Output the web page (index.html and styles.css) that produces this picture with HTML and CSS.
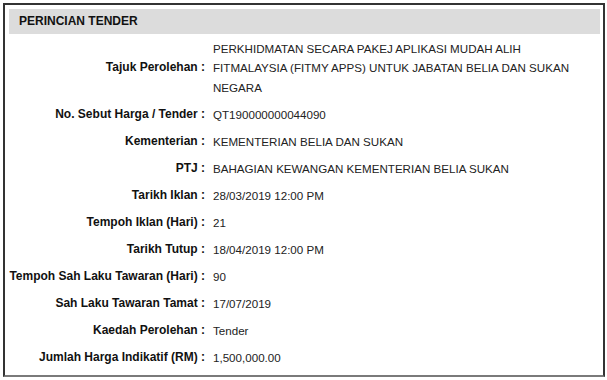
FILE: index.html
```html
<!DOCTYPE html>
<html>
<head>
<meta charset="utf-8">
<link rel="stylesheet" href="styles.css">
</head>
<body>
<div class="frame">
  <div class="panel-head">PERINCIAN TENDER</div>
  <div class="details">
    <div class="label">Tajuk Perolehan :</div>
    <div class="value">PERKHIDMATAN SECARA PAKEJ APLIKASI MUDAH ALIH FITMALAYSIA (FITMY APPS) UNTUK JABATAN BELIA DAN SUKAN NEGARA</div>
    <div class="label">No. Sebut Harga / Tender :</div>
    <div class="value">QT190000000044090</div>
    <div class="label">Kementerian :</div>
    <div class="value">KEMENTERIAN BELIA DAN SUKAN</div>
    <div class="label">PTJ :</div>
    <div class="value">BAHAGIAN KEWANGAN KEMENTERIAN BELIA SUKAN</div>
    <div class="label">Tarikh Iklan :</div>
    <div class="value">28/03/2019 12:00 PM</div>
    <div class="label">Tempoh Iklan (Hari) :</div>
    <div class="value">21</div>
    <div class="label">Tarikh Tutup :</div>
    <div class="value">18/04/2019 12:00 PM</div>
    <div class="label">Tempoh Sah Laku Tawaran (Hari) :</div>
    <div class="value">90</div>
    <div class="label">Sah Laku Tawaran Tamat :</div>
    <div class="value">17/07/2019</div>
    <div class="label">Kaedah Perolehan :</div>
    <div class="value">Tender</div>
    <div class="label">Jumlah Harga Indikatif (RM) :</div>
    <div class="value">1,500,000.00</div>
  </div>
</div>
</body>
</html>
```
FILE: styles.css
```css
html, body {
  margin: 0;
  padding: 0;
  background: #ffffff;
}
body {
  font-family: "Liberation Sans", Arial, sans-serif;
  font-size: 12px;
  color: #222;
}
.frame {
  margin: 3px 2px 3px 3px;
  height: 374px;
  box-sizing: border-box;
  border: 2px solid #333;
  border-bottom-color: #7a7a7a;
  padding: 4px 3px 4px 4px;
}
.panel-head {
  background: #dcdcdc;
  height: 25px;
  line-height: 25px;
  padding-left: 10px;
  font-weight: bold;
  color: #111;
}
.details {
  display: grid;
  grid-template-columns: 196px 380px;
  column-gap: 8px;
  padding-top: 1px;
}
.label, .value {
  line-height: 19.5px;
  padding: 3.5px 0 4px;
}
.label {
  text-align: right;
  font-weight: bold;
  color: #111;
  display: flex;
  align-items: center;
  justify-content: flex-end;
}
.value {
  color: #222;
  font-size: 11.6px;
}
```
